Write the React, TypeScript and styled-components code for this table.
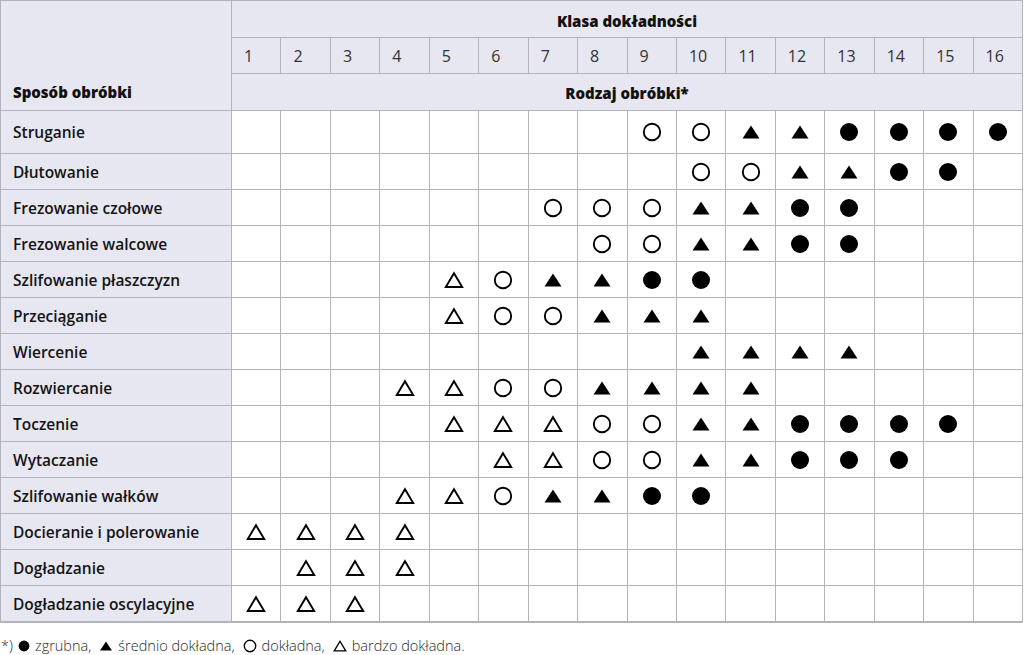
import React from "react";
import styled, { createGlobalStyle } from "styled-components";

const GlobalStyle = createGlobalStyle`
  html, body { margin: 0; padding: 0; background: #ffffff; }
  body { font-family: "Open Sans", "Noto Sans", sans-serif; color: #111; }
`;

type Mark = "fc" | "ft" | "oc" | "ot" | null;

const C: Mark = "fc";
const T: Mark = "ft";
const O: Mark = "oc";
const D: Mark = "ot";
const _: Mark = null;

const rows: { name: string; marks: Mark[] }[] = [
  { name: "Struganie", marks: [_, _, _, _, _, _, _, _, O, O, T, T, C, C, C, C] },
  { name: "Dłutowanie", marks: [_, _, _, _, _, _, _, _, _, O, O, T, T, C, C, _] },
  { name: "Frezowanie czołowe", marks: [_, _, _, _, _, _, O, O, O, T, T, C, C, _, _, _] },
  { name: "Frezowanie walcowe", marks: [_, _, _, _, _, _, _, O, O, T, T, C, C, _, _, _] },
  { name: "Szlifowanie płaszczyzn", marks: [_, _, _, _, D, O, T, T, C, C, _, _, _, _, _, _] },
  { name: "Przeciąganie", marks: [_, _, _, _, D, O, O, T, T, T, _, _, _, _, _, _] },
  { name: "Wiercenie", marks: [_, _, _, _, _, _, _, _, _, T, T, T, T, _, _, _] },
  { name: "Rozwiercanie", marks: [_, _, _, D, D, O, O, T, T, T, T, _, _, _, _, _] },
  { name: "Toczenie", marks: [_, _, _, _, D, D, D, O, O, T, T, C, C, C, C, _] },
  { name: "Wytaczanie", marks: [_, _, _, _, _, D, D, O, O, T, T, C, C, C, _, _] },
  { name: "Szlifowanie wałków", marks: [_, _, _, D, D, O, T, T, C, C, _, _, _, _, _, _] },
  { name: "Docieranie i polerowanie", marks: [D, D, D, D, _, _, _, _, _, _, _, _, _, _, _, _] },
  { name: "Dogładzanie", marks: [_, D, D, D, _, _, _, _, _, _, _, _, _, _, _, _] },
  { name: "Dogładzanie oscylacyjne", marks: [D, D, D, _, _, _, _, _, _, _, _, _, _, _, _, _] },
];

const Page = styled.div`
  width: 1024px;
  height: 655px;
  display: flex;
  flex-direction: column;
`;

const Grid = styled.div`
  width: 1023px;
  box-sizing: border-box;
  display: grid;
  grid-template-columns: 230px repeat(16, 1fr);
  grid-template-rows: 36px 35px 36px 42px repeat(13, 35px);
  gap: 1px;
  padding: 1px 1px 2px 1px;
  background: #b3b3ba;
`;

const HeadCell = styled.div<{ $col?: string; $row?: string }>`
  background: #e7e7f1;
  grid-column: ${(p) => p.$col || "auto"};
  grid-row: ${(p) => p.$row || "auto"};
  display: flex;
  align-items: center;
`;

const CornerCell = styled(HeadCell)`
  align-items: flex-end;
  padding: 0 0 8px 12px;
  font-weight: 800;
  font-size: 15px;
  color: #111;
`;

const TitleCell = styled(HeadCell)<{ $top?: number }>`
  justify-content: center;
  padding-top: ${(p) => p.$top || 0}px;
  font-weight: 800;
  font-size: 15px;
  color: #111;
`;

const NumCell = styled(HeadCell)`
  padding-left: 12px;
  font-size: 16px;
  font-weight: 400;
  color: #333;
`;

const LabelCell = styled.div`
  background: #e7e7f1;
  display: flex;
  align-items: center;
  padding: 0 0 0 12px;
  font-size: 15.5px;
  font-weight: 600;
  color: #141414;
  white-space: nowrap;
`;

const DataCell = styled.div`
  background: #ffffff;
  display: flex;
  align-items: center;
  justify-content: center;
`;

const Footer = styled.div`
  margin-top: 13px;
  padding-left: 1px;
  font-size: 14.5px;
  font-weight: 300;
  color: #2a2a2a;
  display: flex;
  align-items: center;
  gap: 5px;
  white-space: nowrap;
`;

const Item = styled.span`
  margin-right: 3px;
`;

const Sym = ({ m, size = 20 }: { m: Mark; size?: number }) => {
  if (!m) return null;
  return (
    <svg width={size} height={size} viewBox="0 0 20 20" style={{ display: "block" }}>
      {m === "fc" && <circle cx="10" cy="10" r="9" fill="#000" />}
      {m === "oc" && <circle cx="10" cy="10" r="8.2" fill="none" stroke="#000" strokeWidth="1.9" />}
      {m === "ft" && <polygon points="10,3.5 18.5,16.5 1.5,16.5" fill="#000" />}
      {m === "ot" && (
        <polygon points="10,3.2 18.2,17 1.8,17" fill="none" stroke="#000" strokeWidth="1.9" strokeLinejoin="miter" />
      )}
    </svg>
  );
};

export default function App() {
  return (
    <Page>
      <GlobalStyle />
      <Grid>
        <CornerCell $col="1" $row="1 / 4">Sposób obróbki</CornerCell>
        <TitleCell $col="2 / 18" $row="1" $top={3}>Klasa dokładności</TitleCell>
        {Array.from({ length: 16 }, (_, i) => (
          <NumCell key={i} $row="2">{i + 1}</NumCell>
        ))}
        <TitleCell $col="2 / 18" $row="3" $top={1}>Rodzaj obróbki*</TitleCell>
        {rows.map((r) => (
          <React.Fragment key={r.name}>
            <LabelCell>{r.name}</LabelCell>
            {r.marks.map((m, j) => (
              <DataCell key={j}>
                <Sym m={m} />
              </DataCell>
            ))}
          </React.Fragment>
        ))}
      </Grid>
      <Footer>
        <span>*)</span>
        <Sym m="fc" size={12} />
        <Item>zgrubna,</Item>
        <Sym m="ft" size={14} />
        <Item>średnio dokładna,</Item>
        <Sym m="oc" size={14} />
        <Item>dokładna,</Item>
        <Sym m="ot" size={14} />
        <span>bardzo dokładna.</span>
      </Footer>
    </Page>
  );
}
